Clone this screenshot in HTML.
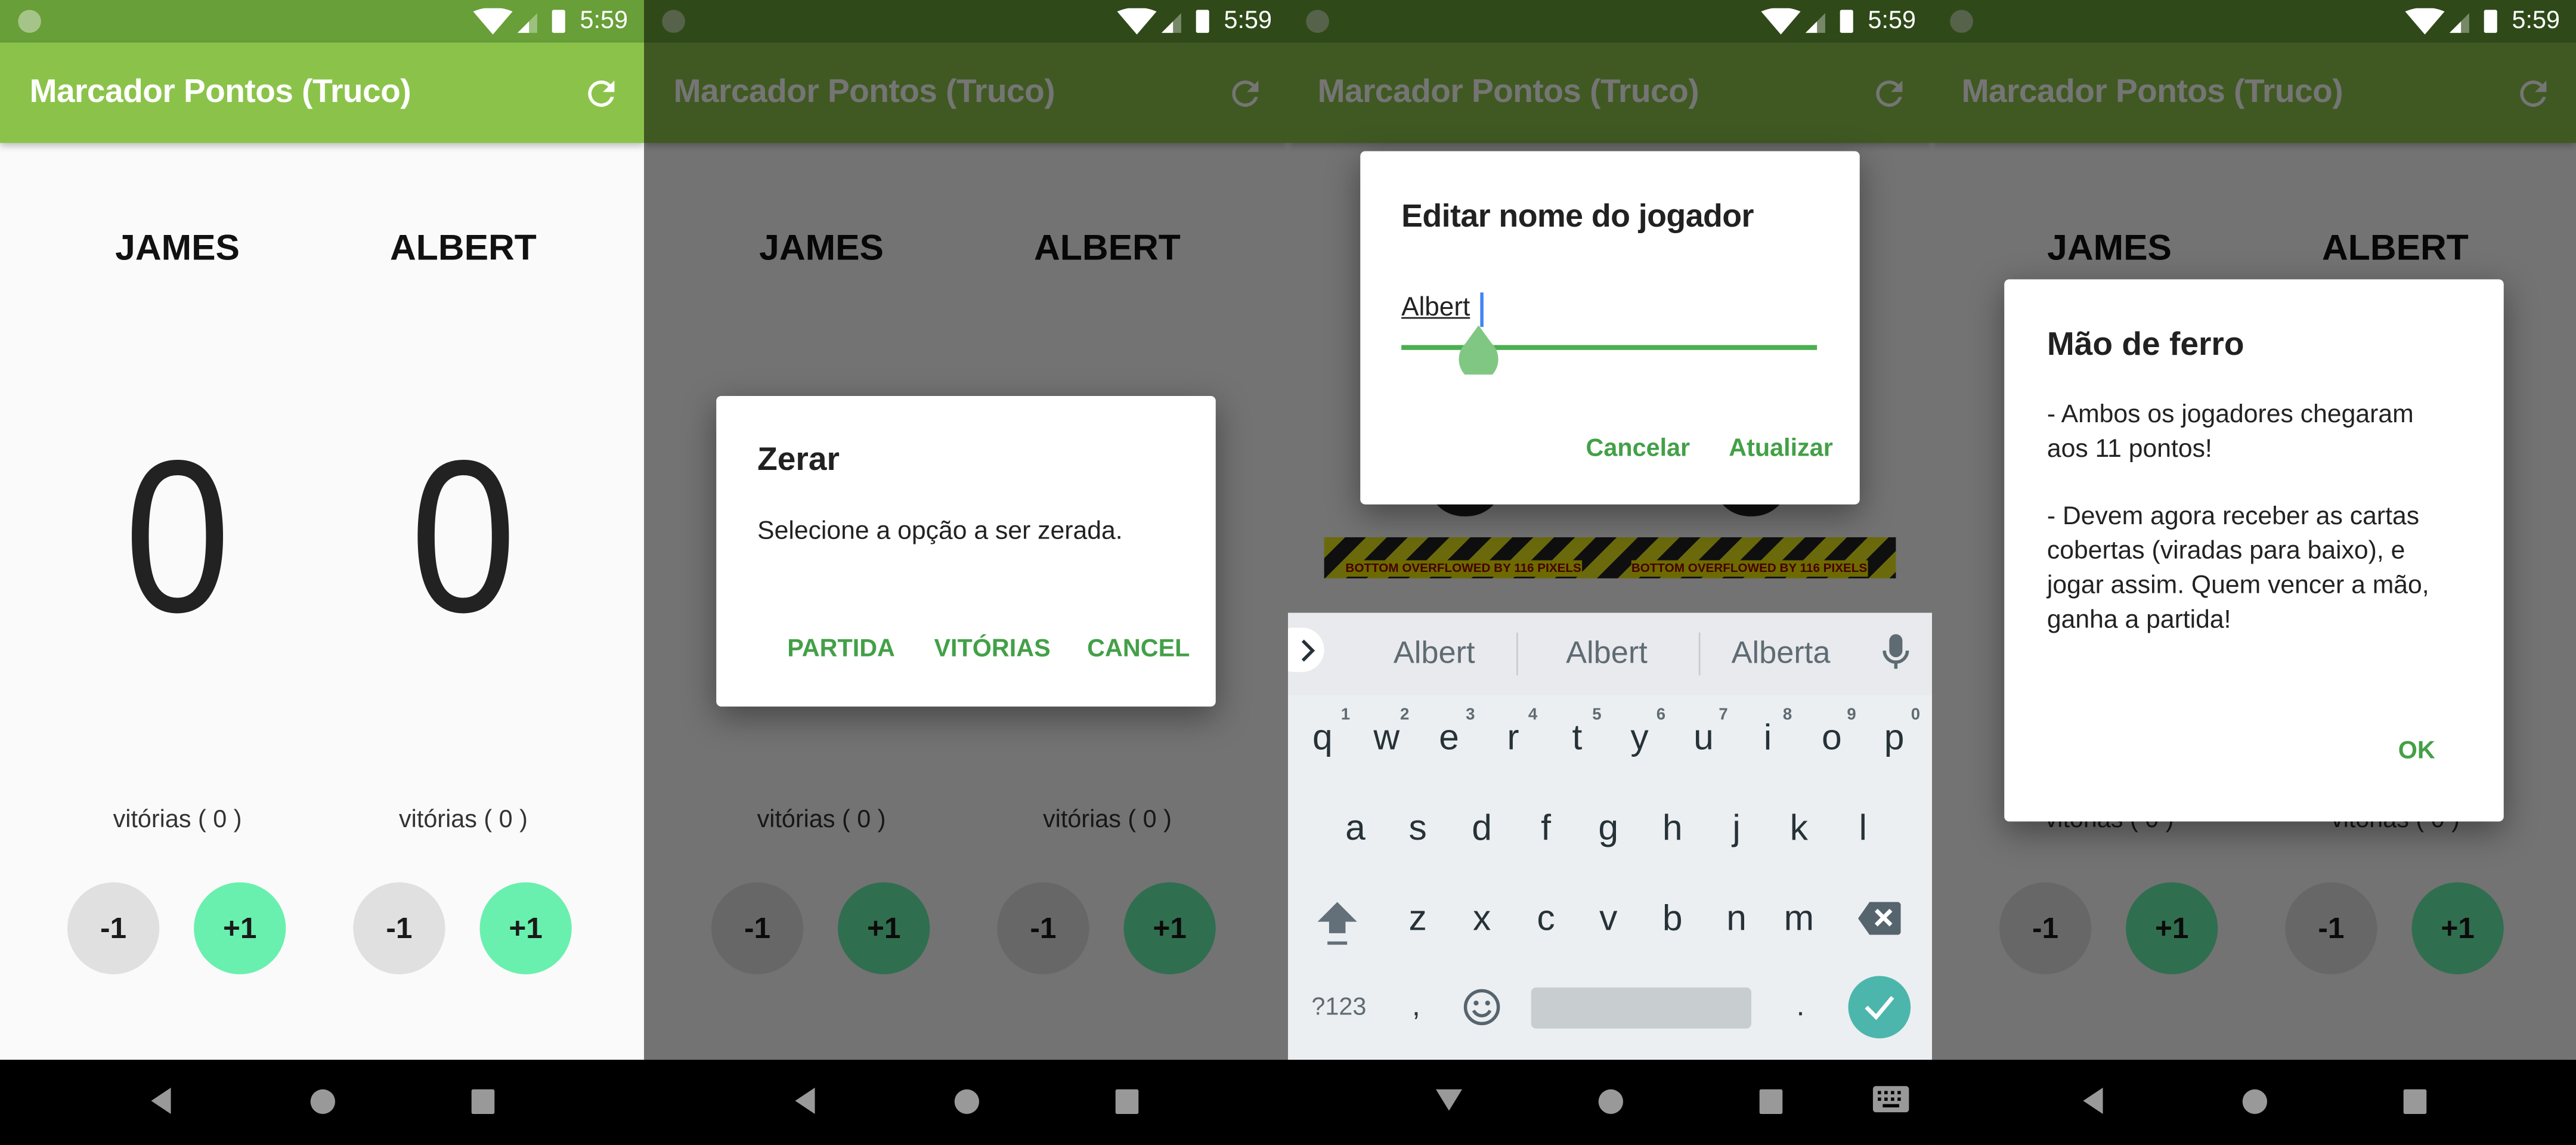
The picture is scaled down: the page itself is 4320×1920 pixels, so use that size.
<!DOCTYPE html>
<html><head><meta charset="utf-8"><style>
*{margin:0;padding:0;box-sizing:border-box}
html,body{width:4320px;height:1920px;overflow:hidden;background:#000}
#w{position:absolute;left:0;top:0;width:1568px;height:697px;transform:scale(2.75510);transform-origin:0 0;font-family:"Liberation Sans",sans-serif}
.p{position:absolute;top:0;width:392px;height:697px;overflow:hidden;background:#fafafa}
.sb{position:absolute;left:0;top:0;width:392px;height:26px;background:#689f38}
.ab{position:absolute;left:0;top:26px;width:392px;height:61px;background:#8bc34a;box-shadow:0 2px 4px rgba(0,0,0,.25)}
.ttl{position:absolute;left:18px;top:45px;font-size:20px;font-weight:bold;color:#fff;letter-spacing:-.2px}
.nav{position:absolute;left:0;top:645px;width:392px;height:52px;background:#000}
.c{position:absolute;transform:translate(-50%,-50%);white-space:nowrap;line-height:1}
.nm{font-size:22px;color:#111;font-weight:bold}
.zero{font-size:132px;color:#222;font-weight:normal;transform:translate(-50%,-50%) scaleX(.88)}
.vit{font-size:15px;color:#333}
.btn{position:absolute;width:56px;height:56px;border-radius:50%;transform:translate(-50%,-50%);display:flex;align-items:center;justify-content:center;font-size:18px;font-weight:bold;color:#1a1a1a}
.m{background:#e0e0e0}.pl{background:#69f0ae}
.scrim{position:absolute;left:0;top:0;width:392px;height:645px;background:rgba(0,0,0,.54)}
.dlg{position:absolute;background:#fff;border-radius:3px;box-shadow:0 6px 20px rgba(0,0,0,.4)}
.g{color:#43a047;font-size:15px;font-weight:bold}
.kb{position:absolute;left:0;top:373px;width:392px;height:272px;background:#eceff1}
.k{position:absolute;transform:translate(-50%,-50%);font-size:22px;color:#263238;line-height:1}
.n{position:absolute;font-size:10px;color:#5f6b73;font-weight:bold;transform:translateX(-50%)}
</style></head><body><div id="w">

<div class="p" style="left:0">
 <div class="sb"></div>
 <div class="ab"></div>
 <div class="ttl">Marcador Pontos (Truco)</div>
 <svg style="position:absolute;left:354px;top:45px" width="24" height="24" viewBox="0 0 24 24"><path d="M17.65 6.35A7.96 7.96 0 0 0 12 4a8 8 0 1 0 7.73 10h-2.08A6 6 0 1 1 12 6c1.66 0 3.14.69 4.22 1.78L13 11h7V4z" fill="#fff"/></svg>
 <div class="c nm" style="left:108px;top:151px">JAMES</div>
 <div class="c nm" style="left:282px;top:151px">ALBERT</div>
 <div class="c zero" style="left:108px;top:327px">0</div>
 <div class="c zero" style="left:282px;top:327px">0</div>
 <div class="c vit" style="left:108px;top:499px">vitórias ( 0 )</div>
 <div class="c vit" style="left:282px;top:499px">vitórias ( 0 )</div>
 <div class="btn m" style="left:69px;top:565px">-1</div>
 <div class="btn pl" style="left:146px;top:565px">+1</div>
 <div class="btn m" style="left:243px;top:565px">-1</div>
 <div class="btn pl" style="left:320px;top:565px">+1</div>
 <div class="nav"></div>
</div>

<div class="p" style="left:392px">
 <div class="sb"></div>
 <div class="ab"></div>
 <div class="ttl">Marcador Pontos (Truco)</div>
 <svg style="position:absolute;left:354px;top:45px" width="24" height="24" viewBox="0 0 24 24"><path d="M17.65 6.35A7.96 7.96 0 0 0 12 4a8 8 0 1 0 7.73 10h-2.08A6 6 0 1 1 12 6c1.66 0 3.14.69 4.22 1.78L13 11h7V4z" fill="#fff"/></svg>
 <div class="c nm" style="left:108px;top:151px">JAMES</div>
 <div class="c nm" style="left:282px;top:151px">ALBERT</div>
 <div class="c zero" style="left:108px;top:327px">0</div>
 <div class="c zero" style="left:282px;top:327px">0</div>
 <div class="c vit" style="left:108px;top:499px">vitórias ( 0 )</div>
 <div class="c vit" style="left:282px;top:499px">vitórias ( 0 )</div>
 <div class="btn m" style="left:69px;top:565px">-1</div>
 <div class="btn pl" style="left:146px;top:565px">+1</div>
 <div class="btn m" style="left:243px;top:565px">-1</div>
 <div class="btn pl" style="left:320px;top:565px">+1</div>
 <div class="scrim"></div>
 <div class="dlg" style="left:44px;top:241px;width:304px;height:189px">
  <div style="position:absolute;left:25px;top:28px;font-size:20px;font-weight:bold;color:#212121">Zerar</div>
  <div style="position:absolute;left:25px;top:74px;font-size:15.5px;color:#222">Selecione a opção a ser zerada.</div>
  <div class="c g" style="left:76px;top:154px">PARTIDA</div>
  <div class="c g" style="left:168px;top:154px">VITÓRIAS</div>
  <div class="c g" style="left:257px;top:154px">CANCEL</div>
 </div>
 <div class="nav"></div>
</div>

<div class="p" style="left:784px">
 <div class="sb"></div>
 <div class="ab"></div>
 <div class="ttl">Marcador Pontos (Truco)</div>
 <svg style="position:absolute;left:354px;top:45px" width="24" height="24" viewBox="0 0 24 24"><path d="M17.65 6.35A7.96 7.96 0 0 0 12 4a8 8 0 1 0 7.73 10h-2.08A6 6 0 1 1 12 6c1.66 0 3.14.69 4.22 1.78L13 11h7V4z" fill="#fff"/></svg>
 <div class="c zero" style="left:108px;top:268px">0</div>
 <div class="c zero" style="left:282px;top:268px">0</div>
 <div style="position:absolute;left:22px;top:327px;width:348px;height:25px;background:repeating-linear-gradient(135deg,#e6e61e 0 9px,#222 9px 18px)"></div>
 <div style="position:absolute;left:35px;top:341px;font-size:7.5px;font-weight:bold;color:#900;background:#eee800;line-height:10px">BOTTOM OVERFLOWED BY 116 PIXELS</div>
 <div style="position:absolute;left:209px;top:341px;font-size:7.5px;font-weight:bold;color:#900;background:#eee800;line-height:10px">BOTTOM OVERFLOWED BY 116 PIXELS</div>
 <div class="scrim"></div>
 <div class="dlg" style="left:44px;top:92px;width:304px;height:215px">
  <div style="position:absolute;left:25px;top:29px;font-size:19.5px;font-weight:bold;color:#212121;letter-spacing:-.2px">Editar nome do jogador</div>
  <div style="position:absolute;left:25px;top:87px;font-size:16px;color:#222;text-decoration:underline">Albert</div>
  <div style="position:absolute;left:73px;top:86px;width:2px;height:21px;background:#4285f4"></div>
  <div style="position:absolute;left:25px;top:118px;width:253px;height:3px;background:#4caf50"></div>
  <svg style="position:absolute;left:59px;top:106px" width="26" height="30" viewBox="0 0 26 30"><path d="M13 0 L21 11 A12 13 0 1 1 5 11 Z" fill="#81c784"/></svg>
  <div class="c g" style="left:169px;top:181px">Cancelar</div>
  <div class="c g" style="left:256px;top:181px">Atualizar</div>
 </div>
 <div class="kb">
  <div style="position:absolute;left:0;top:0;width:392px;height:50px;background:#e8eaed"></div>
  <div style="position:absolute;left:-10px;top:9px;width:32px;height:27px;border-radius:14px;background:#fff"></div>
  <svg style="position:absolute;left:7px;top:16px" width="10" height="14" viewBox="0 0 10 14"><path d="M2 1 L8 7 L2 13" stroke="#263238" stroke-width="2" fill="none"/></svg>
  <div class="k" style="left:89px;top:25px;color:#5f6b73;font-size:19px">Albert</div>
  <div style="position:absolute;left:139px;top:12px;width:1px;height:26px;background:#c8cdd0"></div>
  <div class="k" style="left:194px;top:25px;color:#5f6b73;font-size:19px">Albert</div>
  <div style="position:absolute;left:250px;top:12px;width:1px;height:26px;background:#c8cdd0"></div>
  <div class="k" style="left:300px;top:25px;color:#5f6b73;font-size:19px">Alberta</div>
  <svg style="position:absolute;left:362px;top:13px" width="16" height="22" viewBox="0 0 16 22"><rect x="4" y="0" width="8" height="14" rx="4" fill="#5f6b73"/><path d="M1 10a7 7 0 0 0 14 0M8 17v4" stroke="#5f6b73" stroke-width="2" fill="none"/></svg>
 </div>
 <div class="k" style="left:21px;top:449px">q</div><div class="n" style="left:35px;top:430px">1</div>
 <div class="k" style="left:60px;top:449px">w</div><div class="n" style="left:71px;top:430px">2</div>
 <div class="k" style="left:98px;top:449px">e</div><div class="n" style="left:111px;top:430px">3</div>
 <div class="k" style="left:137px;top:449px">r</div><div class="n" style="left:149px;top:430px">4</div>
 <div class="k" style="left:176px;top:449px">t</div><div class="n" style="left:188px;top:430px">5</div>
 <div class="k" style="left:214px;top:449px">y</div><div class="n" style="left:227px;top:430px">6</div>
 <div class="k" style="left:253px;top:449px">u</div><div class="n" style="left:265px;top:430px">7</div>
 <div class="k" style="left:292px;top:449px">i</div><div class="n" style="left:304px;top:430px">8</div>
 <div class="k" style="left:331px;top:449px">o</div><div class="n" style="left:343px;top:430px">9</div>
 <div class="k" style="left:369px;top:449px">p</div><div class="n" style="left:382px;top:430px">0</div>
 <div class="k" style="left:41px;top:504px">a</div>
 <div class="k" style="left:79px;top:504px">s</div>
 <div class="k" style="left:118px;top:504px">d</div>
 <div class="k" style="left:157px;top:504px">f</div>
 <div class="k" style="left:195px;top:504px">g</div>
 <div class="k" style="left:234px;top:504px">h</div>
 <div class="k" style="left:273px;top:504px">j</div>
 <div class="k" style="left:311px;top:504px">k</div>
 <div class="k" style="left:350px;top:504px">l</div>
 <svg style="position:absolute;left:17px;top:548px" width="26" height="30" viewBox="0 0 26 30"><path d="M13 1 L25 13 H18 V20 H8 V13 H1 Z" fill="#637079"/><rect x="7" y="25" width="12" height="2" fill="#637079"/></svg>
 <div class="k" style="left:79px;top:559px">z</div>
 <div class="k" style="left:118px;top:559px">x</div>
 <div class="k" style="left:157px;top:559px">c</div>
 <div class="k" style="left:195px;top:559px">v</div>
 <div class="k" style="left:234px;top:559px">b</div>
 <div class="k" style="left:273px;top:559px">n</div>
 <div class="k" style="left:311px;top:559px">m</div>
 <svg style="position:absolute;left:347px;top:549px" width="26" height="20" viewBox="0 0 26 20"><path d="M7 0 H24 a2 2 0 0 1 2 2 V18 a2 2 0 0 1 -2 2 H7 L0 10 Z" fill="#56646e"/><path d="M11 5 L20 14 M20 5 L11 14" stroke="#fff" stroke-width="2.5"/></svg>
 <div class="k" style="left:31px;top:613px;font-size:15px;color:#5f6b73">?123</div>
 <div class="k" style="left:78px;top:612px;font-size:18px">,</div>
 <svg style="position:absolute;left:106px;top:601px" width="24" height="24" viewBox="0 0 24 24"><circle cx="12" cy="12" r="10" stroke="#56646e" stroke-width="2" fill="none"/><circle cx="8.5" cy="9.5" r="1.5" fill="#56646e"/><circle cx="15.5" cy="9.5" r="1.5" fill="#56646e"/><path d="M7 14a5.5 5.5 0 0 0 10 0" stroke="#56646e" stroke-width="2" fill="none"/></svg>
 <div style="position:absolute;left:148px;top:601px;width:134px;height:25px;border-radius:3px;background:#c8cdd0"></div>
 <div class="k" style="left:312px;top:612px;font-size:18px">.</div>
 <div style="position:absolute;left:341px;top:594px;width:38px;height:38px;border-radius:50%;background:#4db6ac"></div>
 <svg style="position:absolute;left:350px;top:604px" width="20" height="18" viewBox="0 0 20 18"><path d="M2 9 L8 15 L18 3" stroke="#fff" stroke-width="2.5" fill="none"/></svg>
 <div class="nav"></div>
</div>

<div class="p" style="left:1176px">
 <div class="sb"></div>
 <div class="ab"></div>
 <div class="ttl">Marcador Pontos (Truco)</div>
 <svg style="position:absolute;left:354px;top:45px" width="24" height="24" viewBox="0 0 24 24"><path d="M17.65 6.35A7.96 7.96 0 0 0 12 4a8 8 0 1 0 7.73 10h-2.08A6 6 0 1 1 12 6c1.66 0 3.14.69 4.22 1.78L13 11h7V4z" fill="#fff"/></svg>
 <div class="c nm" style="left:108px;top:151px">JAMES</div>
 <div class="c nm" style="left:282px;top:151px">ALBERT</div>
 <div class="c zero" style="left:108px;top:327px">0</div>
 <div class="c zero" style="left:282px;top:327px">0</div>
 <div class="c vit" style="left:108px;top:499px">vitórias ( 0 )</div>
 <div class="c vit" style="left:282px;top:499px">vitórias ( 0 )</div>
 <div class="btn m" style="left:69px;top:565px">-1</div>
 <div class="btn pl" style="left:146px;top:565px">+1</div>
 <div class="btn m" style="left:243px;top:565px">-1</div>
 <div class="btn pl" style="left:320px;top:565px">+1</div>
 <div class="scrim"></div>
 <div class="dlg" style="left:44px;top:170px;width:304px;height:330px">
  <div style="position:absolute;left:26px;top:29px;font-size:20px;font-weight:bold;color:#212121">Mão de ferro</div>
  <div style="position:absolute;left:26px;top:73px;width:238px;font-size:15.5px;line-height:20.8px;color:#222">- Ambos os jogadores chegaram aos 11 pontos!<br><br>- Devem agora receber as cartas cobertas (viradas para baixo), e jogar assim. Quem vencer a mão, ganha a partida!</div>
  <div class="c g" style="left:251px;top:287px">OK</div>
 </div>
 <div class="nav"></div>
</div>

</div>
<script>
var w=document.getElementById('w');
for(var i=0;i<4;i++){
 var x=i*392;
 var s='<div style="position:absolute;left:'+(x+11)+'px;top:6px;width:14px;height:14px;border-radius:50%;background:'+(i?'#56634a':'#a5c48a')+'"></div>'+
 '<svg style="position:absolute;left:'+(x+288)+'px;top:5px" width="60" height="16" viewBox="0 0 60 16"><path d="M0 2 Q12 -3 24 2 L12 16 Z" fill="#fff"/><path d="M27 15 L39 3 V15 Z" fill="rgba(255,255,255,.35)"/><path d="M27 15 L34 8 V15 Z" fill="#fff"/><rect x="48" y="1" width="8" height="14" rx="1" fill="#fff"/></svg>'+
 '<div style="position:absolute;left:'+(x+353)+'px;top:5px;font-size:15px;color:#fff;line-height:16px">5:59</div>';
 if(i==2){
  s+='<svg style="position:absolute;left:'+(x+89)+'px;top:661px" width="18" height="16" viewBox="0 0 18 16"><path d="M1 2 H17 L9 15 Z" fill="#999"/></svg>';
  s+='<svg style="position:absolute;left:'+(x+356)+'px;top:661px" width="22" height="16" viewBox="0 0 22 16"><rect width="22" height="16" rx="2" fill="#999"/><g fill="#000"><rect x="3" y="3" width="2" height="2"/><rect x="7" y="3" width="2" height="2"/><rect x="11" y="3" width="2" height="2"/><rect x="15" y="3" width="2" height="2"/><rect x="3" y="7" width="2" height="2"/><rect x="7" y="7" width="2" height="2"/><rect x="11" y="7" width="2" height="2"/><rect x="15" y="7" width="2" height="2"/><rect x="6" y="11" width="10" height="2"/></g></svg>';
 } else {
  s+='<svg style="position:absolute;left:'+(x+90)+'px;top:661px" width="16" height="18" viewBox="0 0 16 18"><path d="M14 1 V17 L2 9 Z" fill="#999"/></svg>';
 }
 s+='<div style="position:absolute;left:'+(x+189)+'px;top:663px;width:15px;height:15px;border-radius:50%;background:#999"></div>';
 s+='<div style="position:absolute;left:'+(x+287)+'px;top:663px;width:14px;height:15px;border-radius:1px;background:#999"></div>';
 w.insertAdjacentHTML('beforeend',s);
}
</script>
</body></html>
